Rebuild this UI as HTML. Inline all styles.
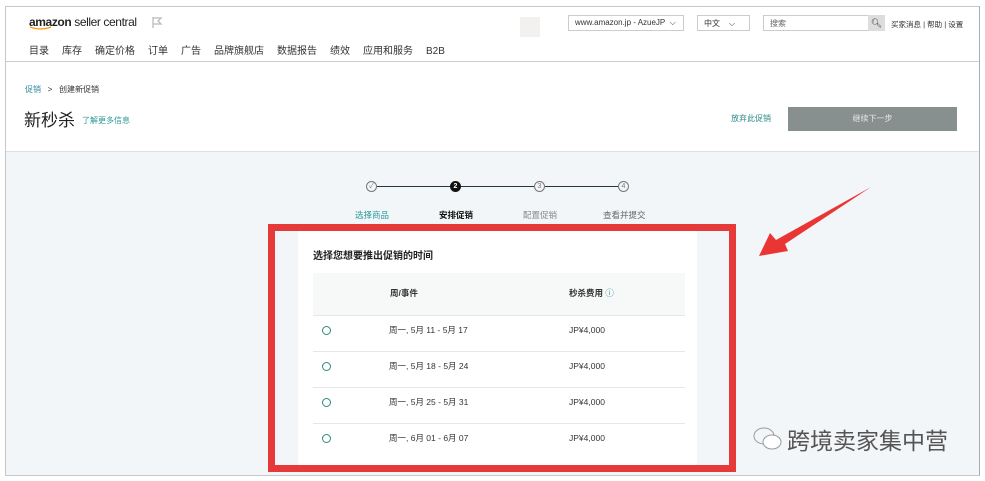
<!DOCTYPE html>
<html><head><meta charset="utf-8"><style>
*{margin:0;padding:0;box-sizing:border-box}
body{width:985px;height:481px;background:#fff;position:relative;overflow:hidden;font-family:"Liberation Sans","Noto Sans CJK SC",sans-serif;color:#333}
.a{position:absolute;white-space:nowrap}
.frame{position:absolute;left:5px;top:6px;width:975px;height:470px;border:1px solid #c8c8c8;border-right-color:#aab;background:#fff}
.gray{position:absolute;left:6px;top:151px;width:973px;height:324px;background:#f3f6f8;border-top:1px solid #e0e0e0}
.nav span{margin-right:13px}
.sel{position:absolute;height:16px;border:1px solid #ccc;background:#fff;font-size:8px;padding:2px 6px;color:#333}
.row{position:absolute;left:313px;width:372px;height:36px;border-top:1px solid #e6e6e6;font-size:8.5px;line-height:10px}
.row .r{position:absolute;left:9px;top:10px;width:9px;height:9px;border:1px solid #2a8a7a;border-radius:50%}
.row .d{position:absolute;left:76px;top:9px}
.row .p{position:absolute;left:256px;top:9px}
.step{position:absolute;top:181px;width:11px;height:11px;border:1px solid #777;border-radius:50%;font-size:7px;text-align:center;line-height:9px;color:#777;background:#f3f6f8}
</style></head><body>
<div class="frame"></div>
<div class="gray"></div>
<div class="a" style="left:6px;top:61px;width:973px;height:1px;background:#ccc"></div>
<div class="a" style="left:29px;top:15px;font-size:12px;color:#222;letter-spacing:-0.4px"><b>amazon</b> seller central</div>
<svg class="a" style="left:29px;top:26px" width="24" height="5"><path d="M1 1 Q12 5 22 1" stroke="#f90" stroke-width="1.3" fill="none"/></svg>
<svg class="a" style="left:151px;top:16px" width="12" height="13"><path d="M2 1 V12 M2 2 H10 L7 5 L10 8 H2" stroke="#bbb" stroke-width="1.3" fill="none"/></svg>
<div class="a nav" style="left:29px;top:42px;font-size:10px;color:#333"><span>目录</span><span>库存</span><span>确定价格</span><span>订单</span><span>广告</span><span>品牌旗舰店</span><span>数据报告</span><span>绩效</span><span>应用和服务</span><span>B2B</span></div>
<div class="a" style="left:520px;top:17px;width:20px;height:20px;background:#f3f0f0"></div>
<div class="sel" style="left:568px;top:15px;width:116px">www.amazon.jp - AzueJP &nbsp;⌵</div>
<div class="sel" style="left:697px;top:15px;width:53px">中文 &nbsp;&nbsp;&nbsp;⌵</div>
<div class="sel" style="left:763px;top:15px;width:106px;color:#666">搜索</div>
<div class="a" style="left:868px;top:15px;width:17px;height:16px;background:#ddd;font-size:9px;text-align:center;line-height:16px">🔍︎</div>
<div class="a" style="left:891px;top:19px;font-size:7.5px;color:#333">买家消息 | 帮助 | 设置</div>
<div class="a" style="left:25px;top:84px;font-size:8px"><span style="color:#2a8a9a">促销</span> &nbsp;&nbsp;&gt;&nbsp;&nbsp; 创建新促销</div>
<div class="a" style="left:24px;top:106px;font-size:17px;color:#222">新秒杀</div>
<div class="a" style="left:82px;top:115px;font-size:8px;color:#2a9a9a">了解更多信息</div>
<div class="a" style="left:731px;top:113px;font-size:8px;color:#2a8a8a">放弃此促销</div>
<div class="a" style="left:788px;top:107px;width:169px;height:24px;background:#87908e;color:#e6e6e6;font-size:8px;text-align:center;line-height:24px">继续下一步</div>
<div class="a" style="left:372px;top:186px;width:252px;height:1px;background:#1e3a3a"></div>
<div class="step" style="left:366px">✓</div>
<div class="step" style="left:450px;background:#111;border-color:#111;color:#fff;font-weight:bold">2</div>
<div class="step" style="left:534px">3</div>
<div class="step" style="left:618px">4</div>
<div class="a" style="left:355px;top:209px;font-size:8.5px;color:#2a9a9a">选择商品</div>
<div class="a" style="left:439px;top:209px;font-size:8.5px;color:#111;font-weight:bold">安排促销</div>
<div class="a" style="left:523px;top:209px;font-size:8.5px;color:#888">配置促销</div>
<div class="a" style="left:603px;top:209px;font-size:8.5px;color:#666">查看并提交</div>
<div class="a" style="left:298px;top:230px;width:399px;height:240px;background:#fff"></div>
<div class="a" style="left:313px;top:247px;font-size:10px;font-weight:bold;color:#222">选择您想要推出促销的时间</div>
<div class="a" style="left:313px;top:273px;width:372px;height:43px;background:#f7f8f8"></div>
<div class="a" style="left:390px;top:287px;font-size:8.5px;font-weight:bold">周/事件</div>
<div class="a" style="left:569px;top:287px;font-size:8.5px;font-weight:bold">秒杀费用 <span style="color:#2a8a8a;font-weight:normal">ⓘ</span></div>
<div class="row" style="top:315px"><div class="r"></div><div class="d">周一, 5月 11 - 5月 17</div><div class="p">JP¥4,000</div></div>
<div class="row" style="top:351px"><div class="r"></div><div class="d">周一, 5月 18 - 5月 24</div><div class="p">JP¥4,000</div></div>
<div class="row" style="top:387px"><div class="r"></div><div class="d">周一, 5月 25 - 5月 31</div><div class="p">JP¥4,000</div></div>
<div class="row" style="top:423px"><div class="r"></div><div class="d">周一, 6月 01 - 6月 07</div><div class="p">JP¥4,000</div></div>
<div class="a" style="left:268px;top:224px;width:468px;height:248px;border:7px solid #e63a3a"></div>
<svg class="a" style="left:0;top:0" width="985" height="481"><path d="M871 187 L785 244 L788 251 L759 256 L770 233 L776 240 Z" fill="#ea3535"/></svg>
<svg class="a" style="left:752px;top:424px" width="32" height="30"><ellipse cx="12" cy="12" rx="10" ry="8" fill="none" stroke="#999"/><ellipse cx="20" cy="18" rx="9" ry="7" fill="#fff" stroke="#999"/></svg>
<div class="a" style="left:787px;top:422px;font-size:23px;color:#555">跨境卖家集中营</div>
</body></html>
